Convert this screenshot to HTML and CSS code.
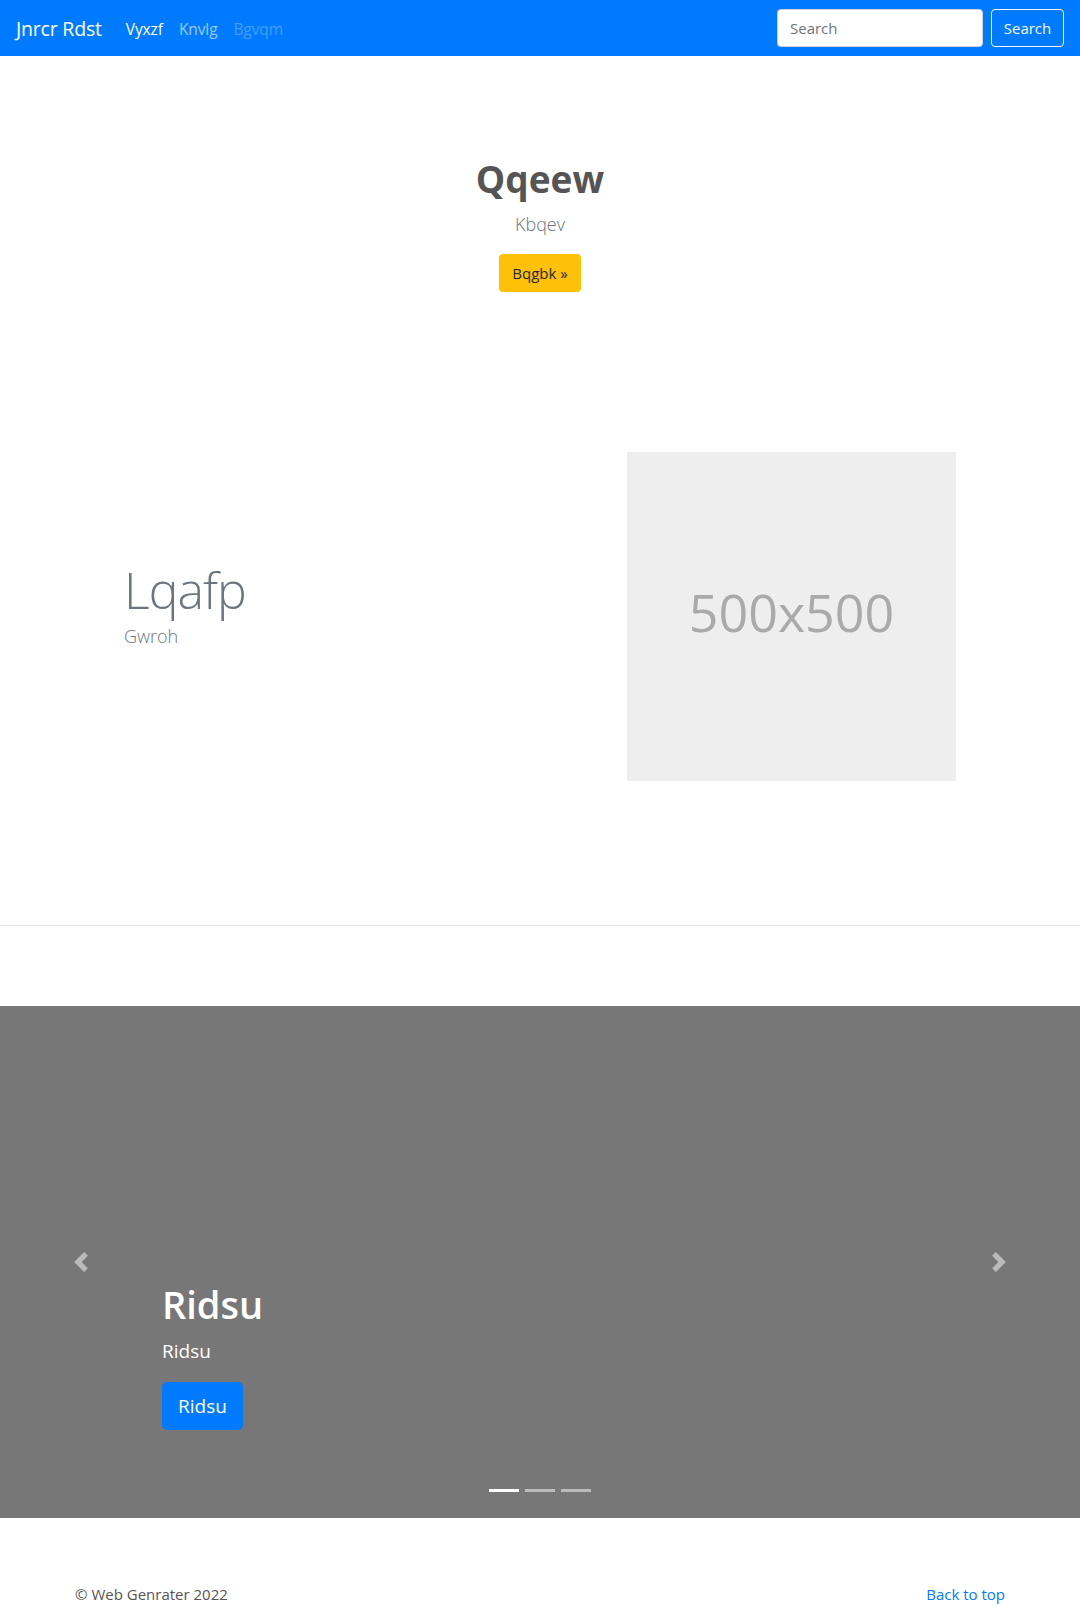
FILE: index.html
```html
<!DOCTYPE html>
<html lang="en">
<head>
<meta charset="utf-8">
<title>Jnrcr Rdst</title>
<link rel="stylesheet" href="styles.css">
</head>
<body>
<header class="navbar">
  <a class="brand" href="#">Jnrcr Rdst</a>
  <nav class="nav">
    <a class="nav-link active" href="#">Vyxzf</a>
    <a class="nav-link" href="#">Knvlg</a>
    <a class="nav-link disabled" href="#">Bgvqm</a>
  </nav>
  <form class="search">
    <input class="search-input" type="text" placeholder="Search">
    <button class="search-btn" type="button">Search</button>
  </form>
</header>

<main>
  <section class="hero">
    <h1 class="hero-title">Qqeew</h1>
    <p class="hero-lead">Kbqev</p>
    <a class="btn-warning" href="#">Bqgbk &raquo;</a>
  </section>

  <section class="featurette">
    <div class="feat-text">
      <h2 class="feat-heading">Lqafp</h2>
      <p class="feat-lead">Gwroh</p>
    </div>
    <div class="placeholder">500x500</div>
  </section>

  <hr class="divider">

  <section class="carousel">
    <a class="carousel-control prev" href="#">
      <svg width="20" height="20" viewBox="0 0 8 8"><path fill="#fff" d="M5.25 0l-4 4 4 4 1.5-1.5L4.25 4l2.5-2.5L5.25 0z"/></svg>
    </a>
    <div class="carousel-caption">
      <h1 class="cap-title">Ridsu</h1>
      <p class="cap-text">Ridsu</p>
      <p class="cap-action"><a class="btn-primary-lg" href="#">Ridsu</a></p>
    </div>
    <a class="carousel-control next" href="#">
      <svg width="20" height="20" viewBox="0 0 8 8"><path fill="#fff" d="M2.75 0l-1.5 1.5L3.75 4l-2.5 2.5L2.75 8l4-4-4-4z"/></svg>
    </a>
    <ol class="indicators">
      <li class="ind active"></li>
      <li class="ind"></li>
      <li class="ind"></li>
    </ol>
  </section>

  <footer class="footer">
    <p class="copy">&copy; Web Genrater 2022</p>
    <a class="top-link" href="#">Back to top</a>
  </footer>
</main>
</body>
</html>
```

FILE: styles.css
```css
* { box-sizing: border-box; }
html, body { margin: 0; padding: 0; }
body {
  font-family: "Open Sans", "Noto Sans", "Liberation Sans", sans-serif;
  font-size: 16px;
  line-height: 1.5;
  color: #212529;
  background: #fff;
}
a { text-decoration: none; }

/* navbar */
.navbar {
  display: flex;
  align-items: center;
  height: 56px;
  padding: 8px 16px;
  background: #007bff;
}
.brand {
  color: #fff;
  font-size: 19.5px;
  line-height: 30px;
  margin: 2px 16px 0 0;
  letter-spacing: -0.2px;
}
.nav { display: flex; flex: 1; margin-top: 3px; }
.nav-link {
  padding: 8px;
  font-size: 15.5px;
  color: rgba(255,255,255,0.6);
  letter-spacing: -0.1px;
}
.nav-link.active { color: #fff; }
.nav-link.disabled { color: rgba(255,255,255,0.28); }
.search { display: flex; align-items: center; gap: 8px; }
.search-input {
  width: 206px;
  height: 38px;
  padding: 6px 12px;
  font-family: inherit;
  font-size: 15px;
  color: #495057;
  border: 1px solid #ced4da;
  border-radius: 4px;
  background: #fff;
}
.search-input::placeholder { color: #6c757d; }
.search-btn {
  height: 38px;
  width: 73px;
  padding: 0;
  font-family: inherit;
  font-size: 15px;
  color: #f8f9fa;
  background: transparent;
  border: 1px solid #f8f9fa;
  border-radius: 4px;
}

/* hero */
.hero {
  padding-top: 99px;
  text-align: center;
}
.hero-title {
  margin: 0 0 6px;
  font-size: 37px;
  line-height: 48px;
  font-weight: 700;
  color: #555;
}
.hero-lead {
  margin: 0 0 15px;
  font-size: 18px;
  line-height: 30px;
  font-weight: 300;
  color: #6c757d;
}
.btn-warning {
  display: inline-block;
  height: 38px;
  padding: 0 13px;
  line-height: 38px;
  font-size: 15px;
  color: #212529;
  background: #ffc107;
  border-radius: 4px;
  vertical-align: top;
}

/* featurette */
.featurette {
  width: 960px;
  margin: 160px auto 0;
  padding: 0 64px 64px;
  display: flex;
  align-items: center;
  justify-content: space-between;
}
.feat-text { padding-bottom: 18px; }
.feat-heading {
  margin: 0 0 6px;
  font-size: 50px;
  line-height: 1;
  font-weight: 300;
  letter-spacing: -1px;
  color: #6c757d;
}
.feat-lead {
  margin: 0;
  font-size: 18px;
  line-height: 30px;
  font-weight: 300;
  color: #6c757d;
}
.placeholder {
  width: 329px;
  height: 329px;
  padding-bottom: 10px;
  display: flex;
  align-items: center;
  justify-content: center;
  background: #eee;
  color: #aaa;
  font-size: 52px;
}

.divider {
  margin: 80px 0;
  border: 0;
  border-top: 1px solid #e5e5e5;
  height: 0;
}

/* carousel */
.carousel {
  position: relative;
  height: 512px;
  background: #777;
}
.carousel-control {
  position: absolute;
  top: 0;
  bottom: 0;
  width: 15%;
  display: flex;
  align-items: center;
  justify-content: center;
  opacity: 0.5;
}
.carousel-control.prev { left: 0; }
.carousel-control.next { right: 0; }
.carousel-caption {
  position: absolute;
  left: 15%;
  right: 15%;
  bottom: 52px;
  padding: 20px 0;
  color: #fff;
}
.cap-title {
  margin: 0 0 8px;
  font-size: 38px;
  line-height: 48px;
  font-weight: 600;
}
.cap-text {
  margin: 0 0 16px;
  font-size: 19px;
  line-height: 30px;
}
.cap-action { margin: 0 0 16px; }
.btn-primary-lg {
  display: inline-block;
  padding: 0 16px;
  height: 48px;
  line-height: 48px;
  font-size: 19px;
  color: #fff;
  background: #007bff;
  border-radius: 5px;
  vertical-align: top;
}
.indicators {
  position: absolute;
  left: 0;
  right: 0;
  bottom: 16px;
  margin: 0;
  padding: 0;
  list-style: none;
  display: flex;
  justify-content: center;
  gap: 6px;
}
.ind {
  width: 30px;
  height: 23px;
  border-top: 10px solid transparent;
  border-bottom: 10px solid transparent;
  background: rgba(255,255,255,0.5);
  background-clip: padding-box;
}
.ind.active { background-color: #fff; }

/* footer */
.footer {
  width: 960px;
  margin: 0 auto;
  padding: 64px 15px 0;
  display: flex;
  justify-content: space-between;
  align-items: flex-start;
}
.copy { margin: 0; font-size: 15px; line-height: 24px; color: #555; }
.top-link { font-size: 15px; line-height: 24px; color: #007bff; }
```
